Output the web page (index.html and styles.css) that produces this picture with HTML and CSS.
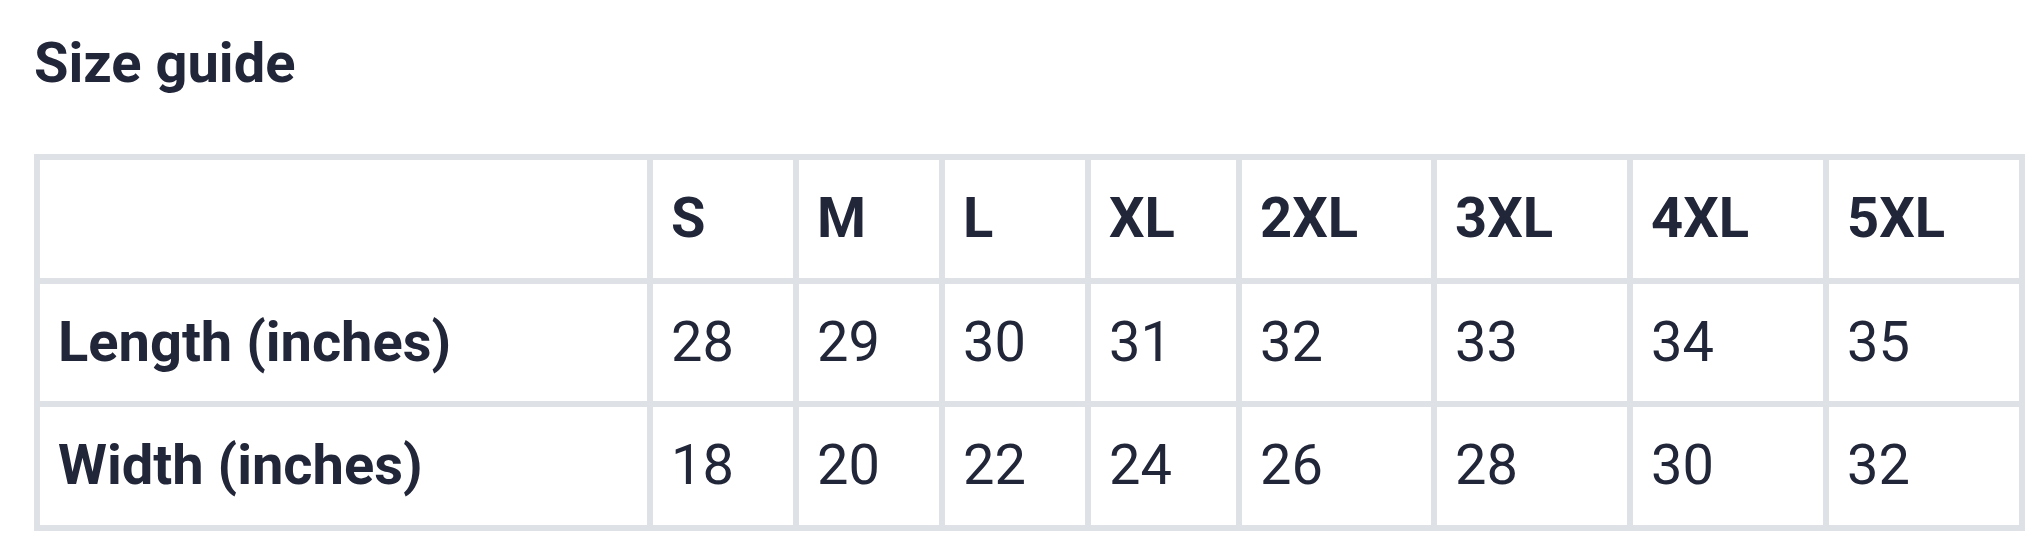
FILE: index.html
```html
<!DOCTYPE html>
<html lang="en">
<head>
<meta charset="utf-8">
<title>Size guide</title>
<link rel="stylesheet" href="styles.css">
</head>
<body>
<main class="page">
  <h2 class="title">Size guide</h2>
  <table class="size-table">
    <thead>
      <tr>
        <th class="c-label"></th>
        <th class="c-s">S</th>
        <th class="c-s">M</th>
        <th class="c-s">L</th>
        <th class="c-xl">XL</th>
        <th class="c-2xl">2XL</th>
        <th class="c-nxl">3XL</th>
        <th class="c-nxl">4XL</th>
        <th class="c-nxl">5XL</th>
      </tr>
    </thead>
    <tbody>
      <tr>
        <th>Length (inches)</th>
        <td>28</td><td>29</td><td>30</td><td>31</td><td>32</td><td>33</td><td>34</td><td>35</td>
      </tr>
      <tr>
        <th>Width (inches)</th>
        <td>18</td><td>20</td><td>22</td><td>24</td><td>26</td><td>28</td><td>30</td><td>32</td>
      </tr>
    </tbody>
  </table>
</main>
</body>
</html>
```

FILE: styles.css
```css
html, body {
  margin: 0;
  padding: 0;
  background: #ffffff;
}

.page {
  padding: 30px 0 0 34px;
  font-family: Roboto, "Noto Sans", sans-serif;
  color: #222639;
}

.title {
  margin: 0 0 57px 0;
  font-size: 56px;
  line-height: 67px;
  font-weight: 700;
}

.size-table {
  border-collapse: separate;
  border-spacing: 0;
  table-layout: fixed;
  width: 1991px;
  box-sizing: border-box;
  border-left: 6px solid #dee2e6;
  border-top: 6px solid #dee2e6;
  font-size: 56px;
}

.size-table th,
.size-table td {
  box-sizing: border-box;
  border-right: 6px solid #dee2e6;
  border-bottom: 6px solid #dee2e6;
  padding: 17px 12px 17px 18px;
  line-height: 83.7px;
  text-align: left;
  white-space: nowrap;
}

.size-table th {
  font-weight: 700;
}

.size-table td {
  font-weight: 400;
}

.c-label { width: 613px; }
.c-s { width: 146px; }
.c-xl { width: 151px; }
.c-2xl { width: 195px; }
.c-nxl { width: 196px; }
```
